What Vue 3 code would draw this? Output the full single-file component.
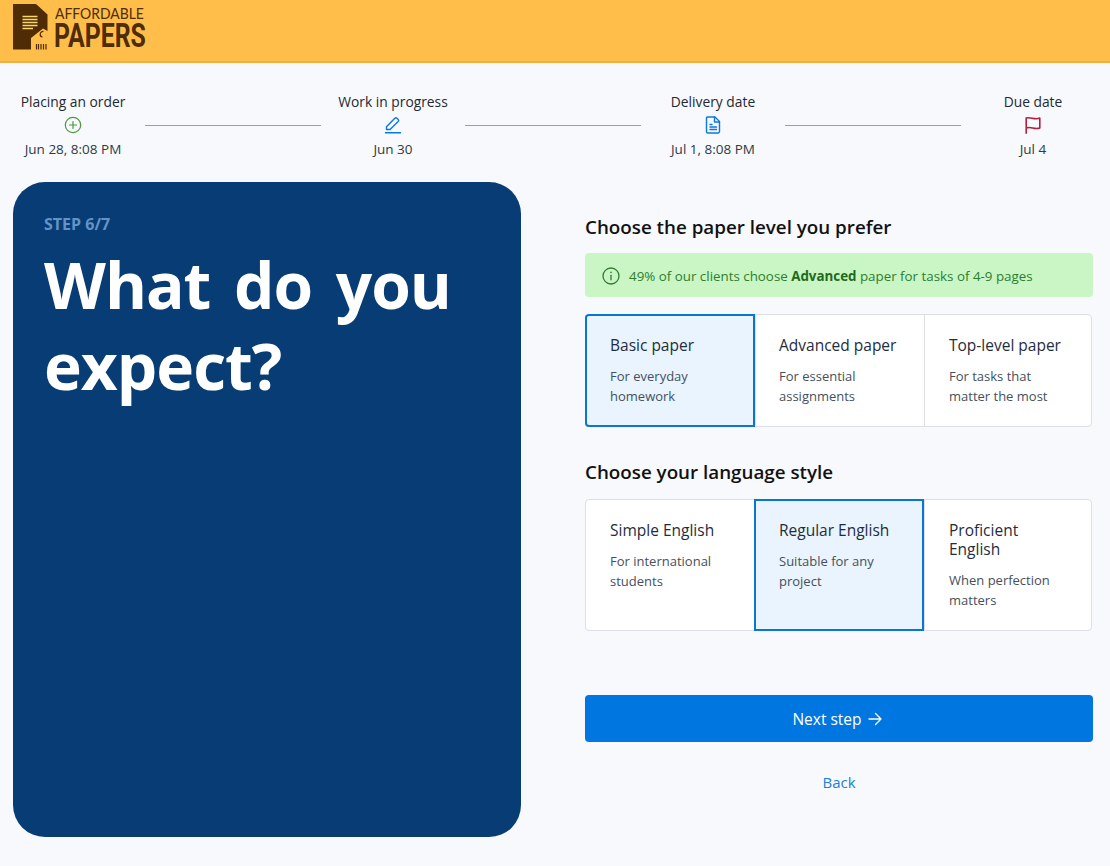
<script setup>
const steps = [
  { label: 'Placing an order', date: 'Jun 28, 8:08 PM', icon: 'plus' },
  { label: 'Work in progress', date: 'Jun 30', icon: 'pen' },
  { label: 'Delivery date', date: 'Jul 1, 8:08 PM', icon: 'doc' },
  { label: 'Due date', date: 'Jul 4', icon: 'flag' }
]
const levels = [
  { title: 'Basic paper', text: 'For everyday homework', on: true },
  { title: 'Advanced paper', text: 'For essential assignments' },
  { title: 'Top-level paper', text: 'For tasks that matter the most' }
]
const styles = [
  { title: 'Simple English', text: 'For international students' },
  { title: 'Regular English', text: 'Suitable for any project', on: true },
  { title: 'Proficient English', text: 'When perfection matters' }
]
</script>

<template>
  <div class="page">
    <header class="top">
      <div class="logo">
        <svg class="logo-mark" viewBox="0 0 36 46" width="36" height="46">
          <path d="M0 0H23L34.500 10.500V27L30 24.500 L18 34 V45.500 H0Z" fill="#4f2c05" />
          <path d="M9.500 12.500H24.500M9.500 15.500H24.500M9.500 18.500H24.500M9.500 21.500H24.500M9.500 24.500H20" stroke="#f9d76e" stroke-width="1.500" fill="none" />
          <path d="M23.500 45.500V40M25.500 45.500V40M28 45.500V40M30.500 45.500V40M33 45.500V40" stroke="#4f2c05" stroke-width="1.200" />
          <path d="M29.500 33a2.500 2.500 0 0 1 1-5.500" stroke="#4f2c05" stroke-width="1.200" fill="none" />
        </svg>
        <div class="logo-text">
          <span class="logo-a">AFFORDABLE</span>
          <span class="logo-p">PAPERS</span>
        </div>
      </div>
    </header>

    <section class="steps">
      <template v-for="(s, i) in steps" :key="s.label">
        <div class="step">
          <div class="step-label">{{ s.label }}</div>
          <svg class="step-icon" viewBox="0 0 18 18" width="18" height="18" fill="none" stroke-linecap="round" stroke-linejoin="round">
            <g v-if="s.icon === 'plus'" stroke="#4c9a3f" stroke-width="1.200">
              <circle cx="9" cy="9" r="7.700" />
              <path d="M9 5.500V12.500M5.500 9H12.500" />
            </g>
            <g v-else-if="s.icon === 'pen'" stroke="#0a78dc" stroke-width="1.400">
              <path d="M2.500 13.500V10.700L10.800 2.200a1.500 1.500 0 0 1 2.100 0l1.300 1.300a1.500 1.500 0 0 1 0 2.100L6 13.500Z" />
              <path d="M1.500 16.800H16.500" />
            </g>
            <g v-else-if="s.icon === 'doc'" stroke="#0a78dc" stroke-width="1.400">
              <path d="M3.500 1H11L15.500 5.500V15.500a1.500 1.500 0 0 1-1.500 1.500H4A1.500 1.500 0 0 1 2.500 15.500V2a1 1 0 0 1 1-1Z" />
              <path d="M10.500 1V6H15.500M6 8.500H8M6 11H12.500M6 13.500H12.500" />
            </g>
            <g v-else stroke="#b51d3d" stroke-width="1.600">
              <path d="M2.200 17.200V2C7 0.500 10.500 4.500 15.800 2V12C10.500 14 7 10 2.200 12" />
            </g>
          </svg>
          <div class="step-date">{{ s.date }}</div>
        </div>
        <div v-if="i < steps.length - 1" class="line"></div>
      </template>
    </section>

    <main class="content">
      <aside class="panel">
        <div class="panel-step">STEP 6/7</div>
        <h1 class="panel-title">What do you expect?</h1>
      </aside>

      <div class="form">
        <h2 class="heading">Choose the paper level you prefer</h2>
        <div class="notice">
          <svg viewBox="0 0 18 18" width="18" height="18" fill="none" stroke="#2f7d2f" stroke-width="1.300" stroke-linecap="round">
            <circle cx="9" cy="9" r="8" />
            <path d="M9 8.300V12.800" />
            <path d="M9 5.300V5.400" stroke-width="1.600" />
          </svg>
          <span>49% of our clients choose <b>Advanced</b> paper for tasks of 4-9 pages</span>
        </div>
        <div class="options">
          <div v-for="o in levels" :key="o.title" class="option" :class="{ on: o.on }">
            <div class="opt-title">{{ o.title }}</div>
            <div class="opt-text">{{ o.text }}</div>
          </div>
        </div>

        <h2 class="heading second">Choose your language style</h2>
        <div class="options">
          <div v-for="o in styles" :key="o.title" class="option" :class="{ on: o.on }">
            <div class="opt-title">{{ o.title }}</div>
            <div class="opt-text">{{ o.text }}</div>
          </div>
        </div>

        <button class="next">
          <span>Next step</span>
          <svg viewBox="0 0 14 14" width="14" height="14" fill="none" stroke="#fff" stroke-width="1.300" stroke-linecap="round" stroke-linejoin="round">
            <path d="M1 7H13M7.500 1.500L13 7L7.500 12.500" />
          </svg>
        </button>
        <a class="back">Back</a>
      </div>
    </main>
  </div>
</template>

<style>
body { margin: 0; background: #f7f9fc; }
</style>

<style scoped>
.page {
  width: 1110px;
  height: 866px;
  overflow: hidden;
  background: #f7f9fc;
  font-family: "Open Sans", "Noto Sans", sans-serif;
  color: #1f2933;
}
.top {
  height: 61px;
  background: #ffbe4a;
  border-bottom: 2px solid #eeb044;
  padding-left: 13px;
  display: flex;
  align-items: flex-start;
}
.logo { display: flex; margin-top: 4px; }
.logo-mark { display: block; }
.logo-text { display: flex; flex-direction: column; margin-left: 5px; color: #4f2c05; width: 92px; }
.logo-a {
  font-family: "Lato", sans-serif;
  font-weight: 400;
  font-size: 16px;
  line-height: 17px;
  margin-left: 1px;
  transform: scaleX(0.87);
  transform-origin: left center;
  white-space: nowrap;
}
.logo-p {
  font-family: "Roboto", sans-serif;
  font-weight: 700;
  font-size: 34px;
  line-height: 29px;
  transform: scaleX(0.73);
  transform-origin: left center;
  white-space: nowrap;
}
.steps {
  display: flex;
  align-items: flex-start;
  padding: 30px 17px 0 13px;
  height: 89px;
}
.step { width: 120px; flex: none; display: flex; flex-direction: column; align-items: center; }
.step-label { font-size: 13.800px; font-weight: 500; line-height: 18px; white-space: nowrap; }
.step-icon { display: block; margin-top: 5px; }
.step-date { font-size: 13.500px; line-height: 18px; margin-top: 6px; color: #2f3b47; white-space: nowrap; }
.line { flex: 1; height: 1px; background: #939ad8; margin: 32px 12px 0; }
.content {
  display: grid;
  grid-template-columns: 508px 508px;
  column-gap: 64px;
  padding-left: 13px;
}
.panel {
  height: 655px;
  background: #083c75;
  border-radius: 32px;
  padding: 32px 31px;
  box-sizing: border-box;
}
.panel-step { font-size: 16px; font-weight: 700; line-height: 20px; color: #6394c6; }
.panel-title {
  margin: 10px 0 0;
  font-size: 64px;
  font-weight: 700;
  letter-spacing: -1px;
  word-spacing: 8px;
  line-height: 81px;
  color: #fff;
}
.form { display: flex; flex-direction: column; }
.heading { margin: 32px 0 0; font-size: 18.800px; font-weight: 600; line-height: 26px; color: #111; white-space: nowrap; }
.heading.second { margin-top: 32px; }
.notice {
  margin-top: 13px;
  height: 44px;
  box-sizing: border-box;
  padding-top: 1px;
  background: #c9f6c4;
  border-radius: 4px;
  display: flex;
  align-items: center;
  gap: 9px;
  padding-left: 17px;
  font-size: 13.350px;
  color: #2f7d2f;
}
.notice b { font-weight: 700; color: #1f6a1f; }
.options {
  margin-top: 14px;
  width: 507px;
  display: grid;
  grid-template-columns: 169px 169px 1fr;
  background: #fff;
  border: 1px solid #dcdfe4;
  border-radius: 4px;
  box-sizing: border-box;
}
.notice + .options { margin-top: 17px; }
.option {
  padding: 21px 24px 20px 24px;
  border-left: 1px solid #dcdfe4;
  box-sizing: border-box;
  min-width: 0;
}
.option:first-child { border-left: none; }
.option:nth-child(2) { padding-left: 23px; }
.option.on {
  margin: -1px 0 -1px -1px;
  padding: 20px 24px 19px 23px;
  background: #e9f4fe;
  border: 2px solid #0b76d1;
}
.option.on:first-child { border-radius: 4px 0 0 4px; }
.opt-title { font-size: 15.500px; font-weight: 500; line-height: 19px; color: #1f2d3d; }
.opt-text { font-size: 13px; line-height: 20px; margin-top: 11px; color: #45505c; }
.next {
  margin-top: 64px;
  height: 47px;
  width: 508px;
  background: #0077e0;
  color: #fff;
  border: none;
  border-radius: 4px;
  font: inherit;
  font-size: 15.500px;
  display: flex;
  align-items: center;
  justify-content: center;
  gap: 6px;
  padding: 1px 4px 0 0;
}
.back { margin-top: 30px; text-align: center; color: #1a7fd9; font-size: 15px; line-height: 20px; }
</style>
